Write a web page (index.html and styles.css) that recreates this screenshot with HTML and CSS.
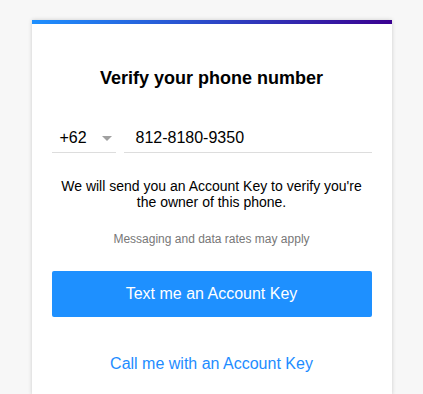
FILE: index.html
```html
<!DOCTYPE html>
<html>
<head>
    <title>Verify your phone number</title>
    <meta name="viewport" content="width=device-width, initial-scale=1.0">
    <link rel="stylesheet" href="styles.css">
</head>
<body>
    <div class="card">
        <h2 class="title">Verify your phone number</h2>
        <div class="phone-row">
            <div class="country-select">
                <span class="country-code">+62</span>
                <span class="caret"></span>
            </div>
            <div class="phone-input">812-8180-9350</div>
        </div>
        <p class="info">We will send you an Account Key to verify you're the owner of this phone.</p>
        <p class="rates">Messaging and data rates may apply</p>
        <button class="primary-btn">Text me an Account Key</button>
        <a class="call-link" href="#">Call me with an Account Key</a>
    </div>
</body>
</html>
```

FILE: styles.css
```css
* {
    margin: 0;
    padding: 0;
    box-sizing: border-box;
}

html, body {
    width: 100%;
    height: 100%;
    overflow: hidden;
}

body {
    background: #f7f7f7;
    font-family: "Liberation Sans", Arial, sans-serif;
    color: #000;
    padding-top: 20px;
}

.card {
    width: 360px;
    margin: 0 auto;
    background: #fff;
    border-top: 4px solid #1e90ff;
    border-image: linear-gradient(to right, #1e90ff, #3a0090) 1;
    border-left: 0;
    border-right: 0;
    border-bottom: 0;
    box-shadow: 0 0 4px rgba(0, 0, 0, 0.18);
    padding: 43px 20px 21px;
    display: flex;
    flex-direction: column;
    align-items: center;
}

.title {
    font-size: 18px;
    font-weight: bold;
    line-height: 22px;
    text-align: center;
    margin-bottom: 34px;
}

.phone-row {
    display: flex;
    gap: 8px;
    width: 100%;
}

.country-select {
    width: 64px;
    display: flex;
    align-items: center;
    justify-content: space-between;
    padding: 0 4px 0 8px;
    height: 30px;
    border-bottom: 1px solid #ddd;
}

.country-code, .phone-input {
    font-size: 16px;
    line-height: 20px;
}

.caret {
    width: 0;
    height: 0;
    border-left: 5px solid transparent;
    border-right: 5px solid transparent;
    border-top: 5px solid #a0a0a0;
    margin-top: 1px;
}

.phone-input {
    flex: 1;
    height: 30px;
    display: flex;
    align-items: center;
    padding-left: 12px;
    border-bottom: 1px solid #ddd;
}

.info {
    font-size: 14px;
    line-height: 16px;
    text-align: center;
    margin-top: 25px;
    padding: 0 8px;
}

.rates {
    font-size: 12px;
    line-height: 14px;
    color: #777;
    margin-top: 22px;
}

.primary-btn {
    width: 100%;
    height: 46px;
    margin-top: 25px;
    background: #1e90ff;
    color: #fff;
    border: 0;
    border-radius: 2px;
    font-family: inherit;
    font-size: 16px;
}

.call-link {
    margin-top: 37px;
    color: #1e8cff;
    text-decoration: none;
    font-size: 16px;
    line-height: 20px;
}
```
